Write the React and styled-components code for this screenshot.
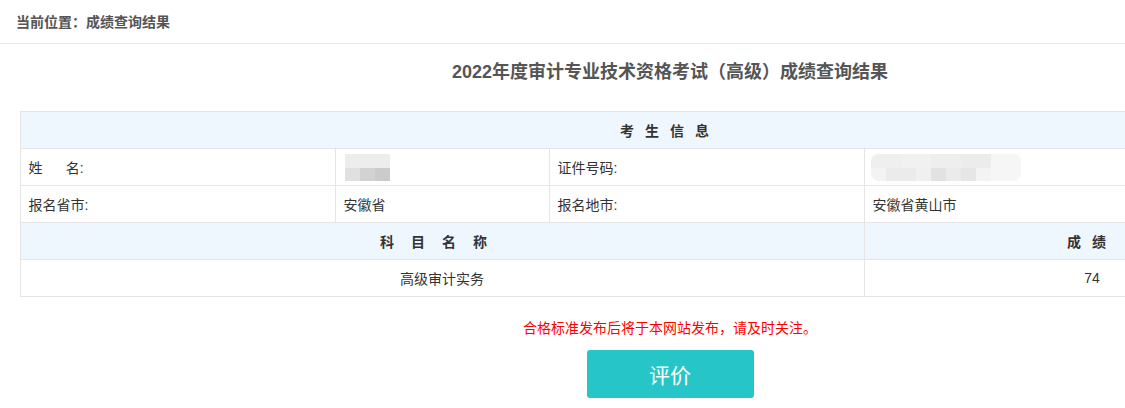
import React from 'react';
import styled, { createGlobalStyle } from 'styled-components';

const GlobalStyle = createGlobalStyle`
  html, body {
    margin: 0;
    padding: 0;
    background: #fff;
  }
  body {
    font-family: "Microsoft YaHei", "Liberation Sans", "Noto Sans CJK SC", sans-serif;
    color: #333;
  }
`;

const ViewportStyled = styled.div`
  width: 100%;
  overflow: hidden;
`;

const PageStyled = styled.div`
  width: 1340px;
`;

const CrumbStyled = styled.div`
  height: 44px;
  box-sizing: border-box;
  padding: 13px 0 0 16px;
  font-size: 14px;
  font-weight: bold;
  color: #555;
  line-height: 18px;
  border-bottom: 1px solid #e8e8e8;
`;

const ContentStyled = styled.div`
  width: 1300px;
  margin-left: 20px;
  display: flex;
  flex-direction: column;
  align-items: center;
`;

const TitleStyled = styled.h2`
  margin: 16px 0 0;
  height: 30px;
  line-height: 24px;
  font-size: 18px;
  font-weight: bold;
  color: #555;
`;

const TableStyled = styled.div`
  margin-top: 21px;
  width: 100%;
  display: grid;
  grid-template-columns: 315px 214px 315px 456px;
  border-top: 1px solid #e5e5e5;
  border-left: 1px solid #e5e5e5;
`;

const CellStyled = styled.div`
  grid-column: ${({ span }) => (span ? `span ${span}` : 'auto')};
  height: 36px;
  border-right: 1px solid #e5e5e5;
  border-bottom: 1px solid #e5e5e5;
  display: flex;
  align-items: center;
  justify-content: ${({ align }) => align || 'flex-start'};
  padding: 0 ${({ pad }) => pad ?? 8}px;
  font-size: 14px;
  color: #333;
  background: ${({ head }) => (head ? '#eef6fe' : '#fff')};
  font-weight: ${({ head }) => (head ? 'bold' : 'normal')};
  letter-spacing: ${({ spacing }) => spacing || 0}px;
  white-space: pre;
`;

const NoticeStyled = styled.div`
  margin-top: 22px;
  font-size: 14px;
  color: #ff0000;
  line-height: 18px;
`;

const ButtonStyled = styled.button`
  margin-top: 13px;
  width: 167px;
  height: 48px;
  border: none;
  border-radius: 3px;
  background: #26c6c8;
  color: #fff;
  font-size: 21px;
  font-weight: normal;
  font-family: "Noto Sans CJK SC", sans-serif;
  cursor: pointer;
`;

const Mosaic = ({ id, width, height, cells, rounded }) => (
  <svg width={width} height={height} viewBox={`0 0 ${width} ${height}`}>
    <defs>
      <clipPath id={id}>
        <rect x="0" y="0" width={width} height={height} rx={rounded ? 8 : 0} />
      </clipPath>
    </defs>
    <g clipPath={`url(#${id})`}>
      {cells.map(([x, y, w, h, c], i) => (
        <rect key={i} x={x} y={y} width={w} height={h} fill={c} />
      ))}
    </g>
  </svg>
);

const nameCells = [
  [0, 0, 45, 14, '#ededed'],
  [0, 14, 15, 13, '#e0e0e0'],
  [15, 14, 15, 13, '#d2d2d2'],
  [30, 14, 15, 13, '#cbcbcb'],
];

const idCells = [
  [0, 0, 150, 27, '#f3f3f3'],
  [0, 0, 30, 14, '#efefef'],
  [30, 0, 30, 14, '#f1f1f1'],
  [60, 0, 30, 14, '#eeeeee'],
  [90, 0, 30, 14, '#ececec'],
  [15, 14, 30, 13, '#ebebeb'],
  [45, 14, 15, 13, '#f0f0f0'],
  [60, 14, 15, 13, '#e2e2e2'],
  [75, 14, 15, 13, '#ebebeb'],
  [90, 14, 15, 13, '#e6e6e6'],
  [120, 0, 30, 27, '#f6f6f6'],
];

const App = () => (
  <>
    <GlobalStyle />
    <ViewportStyled>
      <PageStyled>
        <CrumbStyled>当前位置：成绩查询结果</CrumbStyled>
        <ContentStyled>
          <TitleStyled>2022年度审计专业技术资格考试（高级）成绩查询结果</TitleStyled>
          <TableStyled>
            <CellStyled span={4} head align="center" spacing={11}>
              考生信息
            </CellStyled>
            <CellStyled>{'姓      名:'}</CellStyled>
            <CellStyled pad={9}>
              <Mosaic id="name-blur" width={45} height={27} cells={nameCells} />
            </CellStyled>
            <CellStyled>证件号码:</CellStyled>
            <CellStyled pad={6}>
              <Mosaic id="id-blur" width={150} height={27} cells={idCells} rounded />
            </CellStyled>
            <CellStyled>报名省市:</CellStyled>
            <CellStyled>安徽省</CellStyled>
            <CellStyled>报名地市:</CellStyled>
            <CellStyled>安徽省黄山市</CellStyled>
            <CellStyled span={3} head align="center" spacing={17}>
              科目名称
            </CellStyled>
            <CellStyled head align="center" spacing={11}>
              成绩
            </CellStyled>
            <CellStyled span={3} align="center">
              高级审计实务
            </CellStyled>
            <CellStyled align="center">74</CellStyled>
          </TableStyled>
          <NoticeStyled>合格标准发布后将于本网站发布，请及时关注。</NoticeStyled>
          <ButtonStyled>评价</ButtonStyled>
        </ContentStyled>
      </PageStyled>
    </ViewportStyled>
  </>
);

export default App;
